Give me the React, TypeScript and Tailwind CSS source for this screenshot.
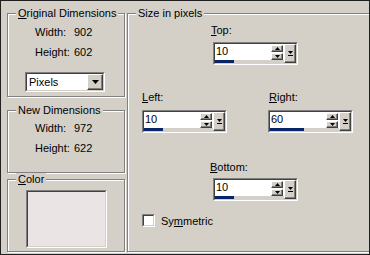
import React from 'react';

const group = 'relative border border-[#808080] shadow-[inset_1px_1px_0_#fff,1px_1px_0_#fff]';
const legend = 'absolute -top-[7px] left-[8px] px-[2px] bg-[#d4d0c8] leading-[12px]';
const raised =
    'border border-t-white border-l-white border-b-[#404040] border-r-[#404040] shadow-[inset_-1px_-1px_0_#808080] bg-[#d4d0c8]';
const sunken =
    'border border-t-[#808080] border-l-[#808080] border-b-white border-r-white';

function Arrow({ up }: { up?: boolean }) {
    return (
        <svg width="5" height="3" viewBox="0 0 5 3" className="block">
            {up ? <path d="M2.5 0 L5 3 L0 3 Z" fill="#000" /> : <path d="M0 0 L5 0 L2.5 3 Z" fill="#000" />}
        </svg>
    );
}

function SpinEdit({ value, fill }: { value: string; fill: number }) {
    return (
        <div className={`${sunken} w-[85px] h-[23px]`}>
            <div className="flex h-full border border-t-[#404040] border-l-[#404040] border-b-[#d4d0c8] border-r-[#d4d0c8]">
                <div className="flex flex-1 flex-col bg-white">
                    <div className="flex flex-1 items-start">
                        <span className="flex-1 pl-[1px] pt-[1px] leading-[13px]">{value}</span>
                        <div className="flex flex-col gap-[1px] pt-[1px] pr-[1px]">
                            <div className={`${raised} w-[12px] h-[7px] flex items-center justify-center`}>
                                <Arrow up />
                            </div>
                            <div className={`${raised} w-[12px] h-[7px] flex items-center justify-center`}>
                                <Arrow />
                            </div>
                        </div>
                    </div>
                    <div className="h-[4px] bg-[#d4d0c8]">
                        <div className="h-full bg-[#0a246a]" style={{ width: fill }} />
                    </div>
                </div>
                <div className={`${raised} w-[12px] flex items-center justify-center`}>
                    <svg width="7" height="6" viewBox="0 0 7 6" className="block">
                        <path d="M1 0 L6 0 L3.5 3 Z" fill="#000" />
                        <rect x="1" y="4" width="5" height="1" fill="#000" />
                    </svg>
                </div>
            </div>
        </div>
    );
}

function Label({ first, rest }: { first: string; rest: string }) {
    return (
        <span className="leading-[12px]">
            <span className="underline underline-offset-1">{first}</span>
            {rest}
        </span>
    );
}

export default function App() {
    return (
        <div
            className="w-[370px] h-[255px] overflow-hidden bg-[#d4d0c8] border border-[#202020] flex gap-[2px] pl-[6px] pt-[12px] pb-[2px] text-[11px] leading-[12px] text-black"
            style={{ fontFamily: '"Liberation Sans", Arial, sans-serif' }}
        >
            <div className="w-[118px] shrink-0 flex flex-col">
                <div className={`${group} h-[84px] pt-[8px]`}>
                    <span className={legend}>
                        <span className="underline underline-offset-1">O</span>riginal Dimensions
                    </span>
                    <div className="grid grid-cols-[39px_auto] pl-[27px]">
                        <span className="h-[20px] flex items-center">Width:</span>
                        <span className="h-[20px] flex items-center">902</span>
                        <span className="h-[20px] flex items-center">Height:</span>
                        <span className="h-[20px] flex items-center">602</span>
                    </div>
                    <div className={`${sunken} ml-[17px] mt-[10px] w-[80px] h-[20px]`}>
                        <div className="flex h-full bg-white border border-t-[#404040] border-l-[#404040] border-b-[#d4d0c8] border-r-[#d4d0c8]">
                            <span className="flex-1 pl-[2px] flex items-center">Pixels</span>
                            <div className={`${raised} w-[16px] flex items-center justify-center`}>
                                <svg width="7" height="4" viewBox="0 0 7 4" className="block">
                                    <path d="M0 0 L7 0 L3.5 4 Z" fill="#000" />
                                </svg>
                            </div>
                        </div>
                    </div>
                </div>
                <div className={`${group} mt-[13px] h-[63px] pt-[7px]`}>
                    <span className={legend}>New Dimensions</span>
                    <div className="grid grid-cols-[39px_auto] pl-[27px]">
                        <span className="h-[20px] flex items-center">Width:</span>
                        <span className="h-[20px] flex items-center">972</span>
                        <span className="h-[20px] flex items-center">Height:</span>
                        <span className="h-[20px] flex items-center">622</span>
                    </div>
                </div>
                <div className={`${group} mt-[6px] flex-1 pt-[10px] pl-[18px]`}>
                    <span className={legend}>
                        <span className="underline underline-offset-1">C</span>olor
                    </span>
                    <div className="w-[81px] h-[58px] border border-t-[#808080] border-l-[#808080] border-b-white border-r-white">
                        <div className="h-full bg-[#ebe4e4] border border-t-[#404040] border-l-[#404040] border-b-[#d4d0c8] border-r-[#d4d0c8]" />
                    </div>
                </div>
            </div>

            <div className={`${group} w-[250px] shrink-0 pl-[14px] flex flex-col`}>
                <span className={legend}>Size in pixels</span>
                <div className="mt-[10px] ml-[69px]">
                    <Label first="T" rest="op:" />
                </div>
                <div className="mt-[6px] ml-[71px]">
                    <SpinEdit value="10" fill={19} />
                </div>
                <div className="mt-[26px] flex gap-[41px]">
                    <div className="flex flex-col">
                        <Label first="L" rest="eft:" />
                        <div className="mt-[7px]">
                            <SpinEdit value="10" fill={19} />
                        </div>
                    </div>
                    <div className="flex flex-col">
                        <span className="pl-[1px]">
                            <Label first="R" rest="ight:" />
                        </span>
                        <div className="mt-[7px]">
                            <SpinEdit value="60" fill={34} />
                        </div>
                    </div>
                </div>
                <div className="mt-[28px] ml-[68px]">
                    <Label first="B" rest="ottom:" />
                </div>
                <div className="mt-[5px] ml-[71px]">
                    <SpinEdit value="10" fill={19} />
                </div>
                <div className="mt-[13px] flex items-center gap-[6px]">
                    <div className={`${sunken} w-[13px] h-[13px]`}>
                        <div className="h-full bg-white border border-t-[#404040] border-l-[#404040] border-b-[#d4d0c8] border-r-[#d4d0c8]" />
                    </div>
                    <span className="leading-[12px]">
                        Sy<span className="underline underline-offset-1">m</span>metric
                    </span>
                </div>
            </div>
        </div>
    );
}
